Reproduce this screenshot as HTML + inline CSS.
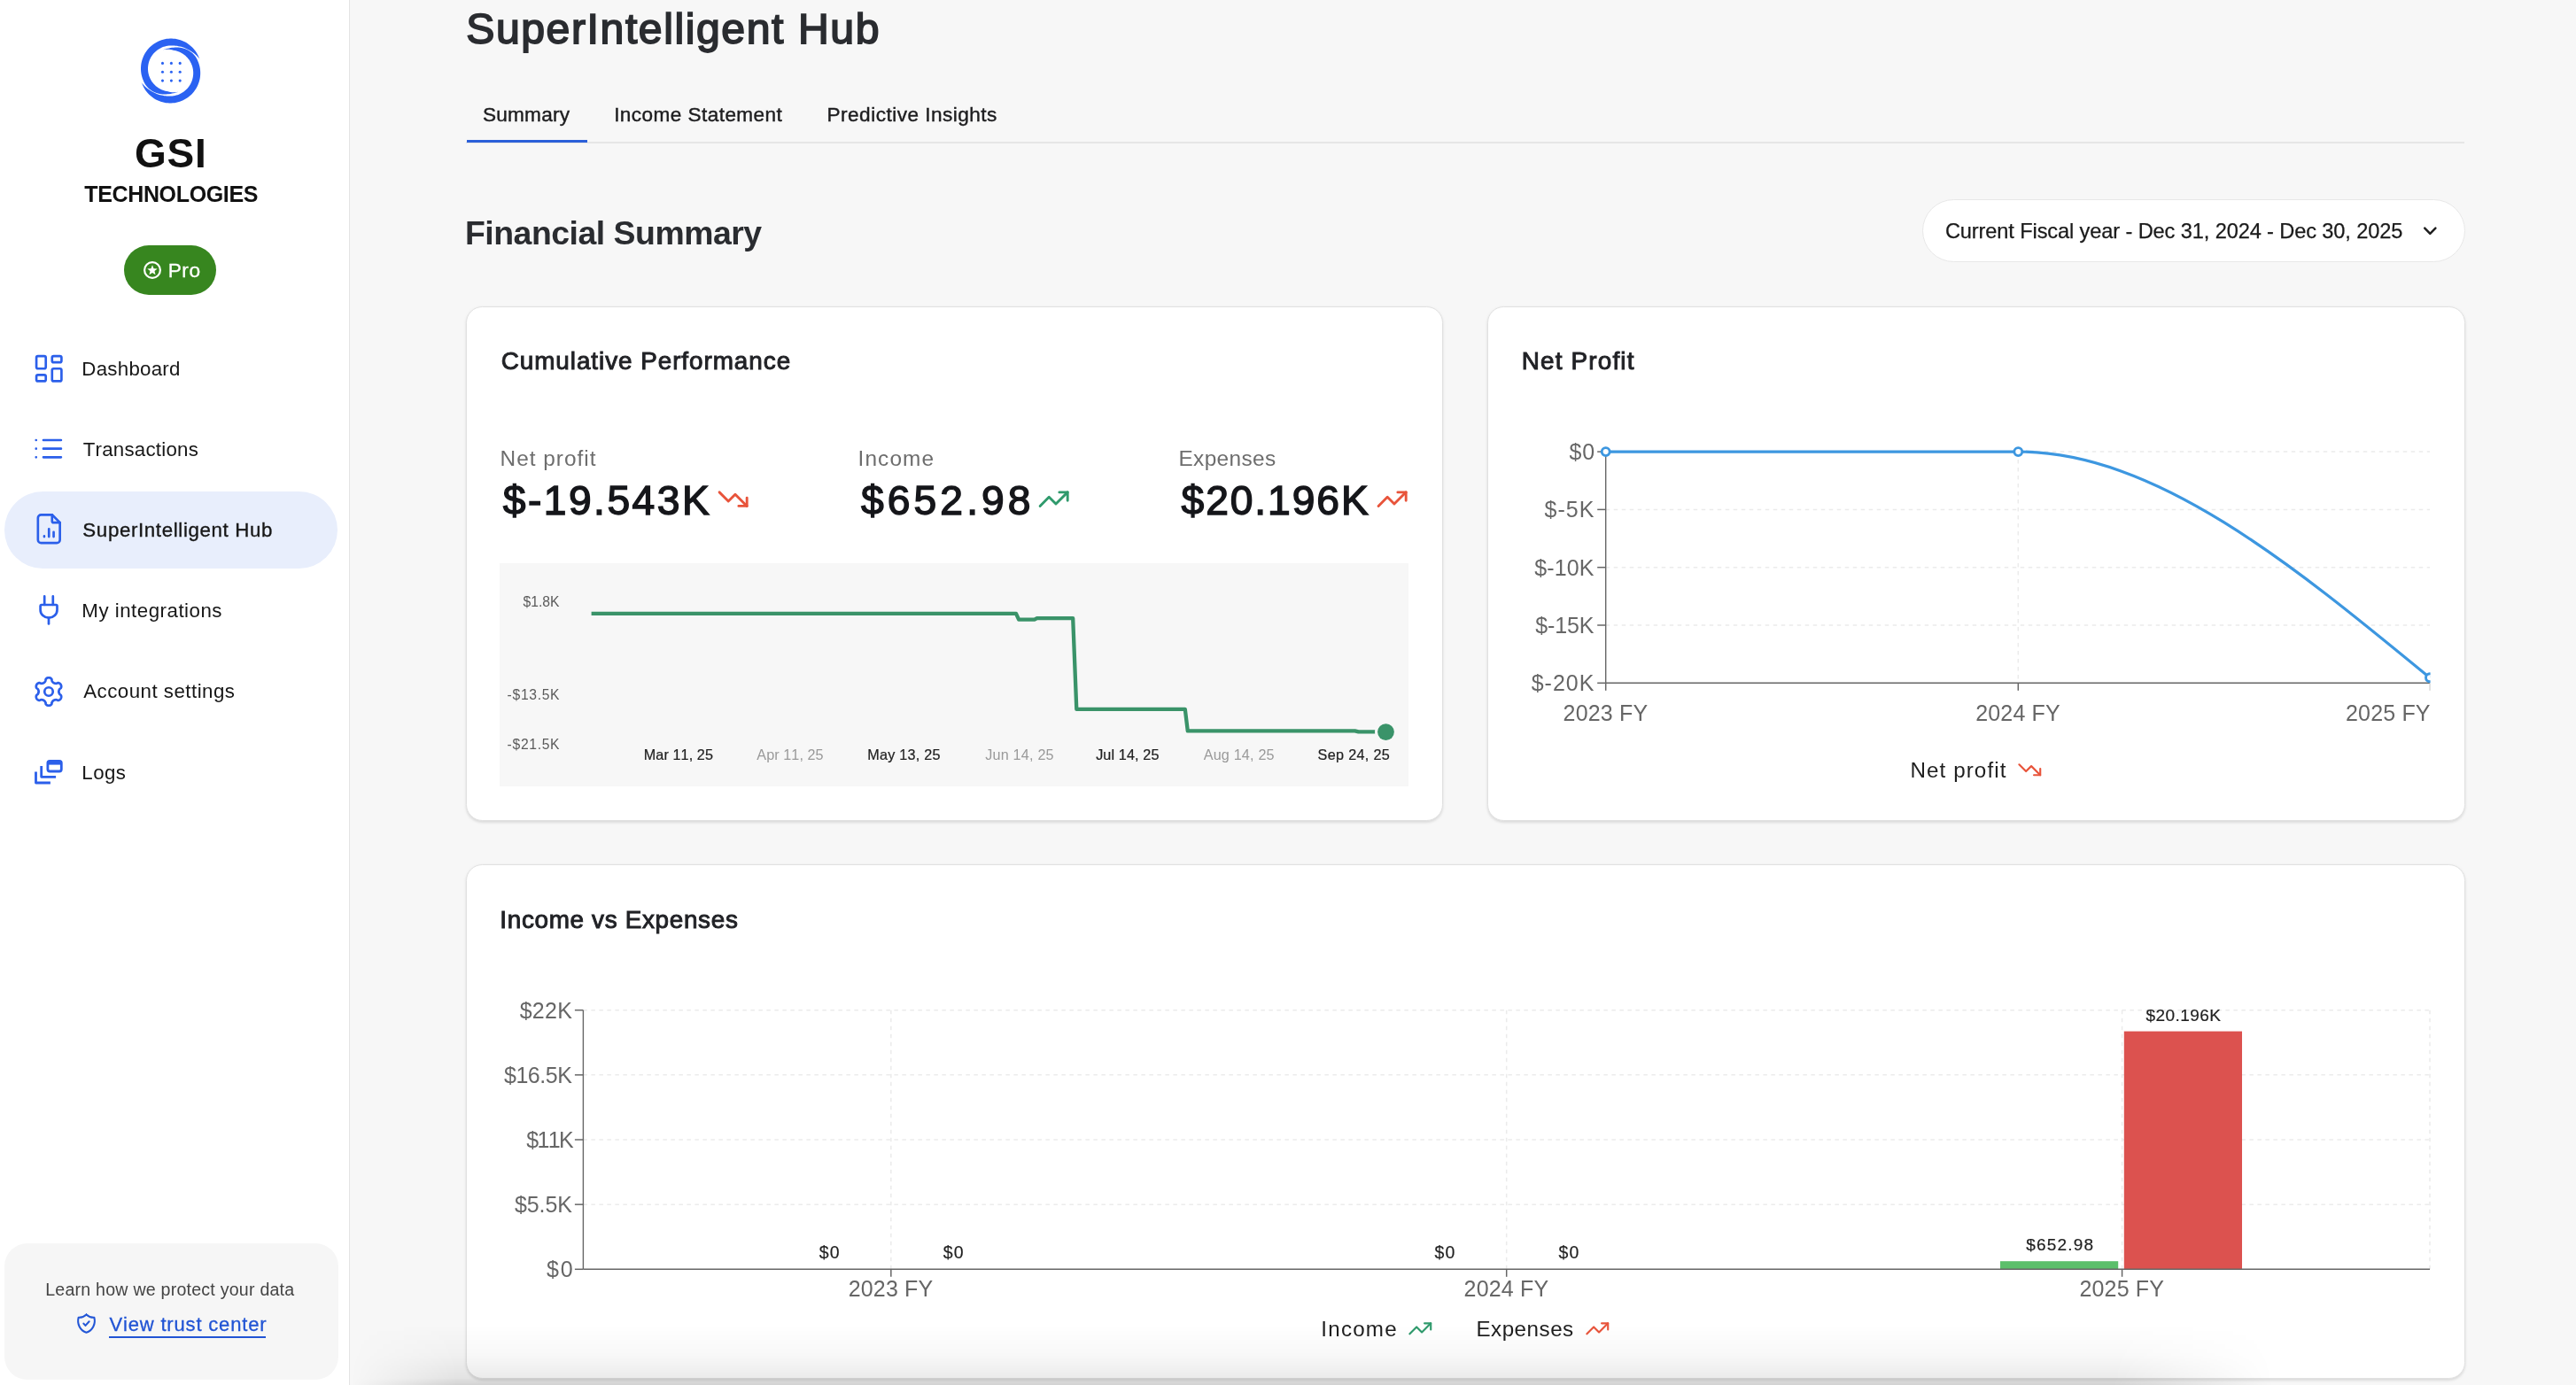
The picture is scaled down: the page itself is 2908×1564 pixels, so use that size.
<!DOCTYPE html>
<html lang="en"><head><meta charset="utf-8"><title>SuperIntelligent Hub</title>
<style>
*{box-sizing:border-box;margin:0;padding:0}
html,body{width:2908px;height:1564px;overflow:hidden;background:#f7f7f7}
body{position:relative;font-family:"Liberation Sans",sans-serif;font-kerning:none;-webkit-font-smoothing:antialiased}
#root{position:absolute;left:0;top:0;width:2908px;height:1564px;will-change:transform}
.t{position:absolute;white-space:nowrap}
.ic{position:absolute;overflow:visible}
.abs{position:absolute}
.card{position:absolute;background:#fff;border:1px solid #e1e1e1;border-radius:18.5px;box-shadow:0 1.5px 4.5px rgba(0,0,0,.05),0 1.5px 3px rgba(0,0,0,.08)}
svg text{font-family:"Liberation Sans",sans-serif}
</style></head>
<body>
<div id="root">
<div class="abs" style="left:0;top:0;width:394.5px;height:1564px;background:#fff;border-right:1.5px solid #e4e4e4"></div>
<svg class="ic" style="left:159px;top:43px" width="67.2" height="74" viewBox="0 0 67.2 74" fill="#2a62f2"><path d="M66.34,23.99L65.67,22.12L64.89,20.29L64.01,18.51L63.02,16.79L61.94,15.12L60.76,13.52L59.48,11.99L58.13,10.54L56.68,9.17L55.17,7.89L53.57,6.70L51.92,5.60L50.20,4.61L48.42,3.71L46.60,2.92L44.73,2.24L42.83,1.67L40.89,1.21L38.94,0.86L36.96,0.63L34.98,0.51L32.99,0.51L31.01,0.63L29.03,0.86L27.08,1.21L25.14,1.67L23.24,2.25L21.37,2.93L19.55,3.72L17.78,4.62L16.06,5.62L14.40,6.72L12.81,7.91L11.29,9.19L9.85,10.56L8.50,12.02L7.23,13.54L6.05,15.14L4.96,16.81L3.98,18.54L3.10,20.32L2.32,22.15L1.65,24.02L1.10,25.93L0.65,27.87L0.32,29.83L0.11,31.80L0.01,33.79L0.02,35.78L0.16,37.76L0.40,39.73L0.77,41.69L1.24,43.61L1.83,45.51L2.53,47.37L3.34,49.19L4.25,50.96L5.27,52.66L6.43,54.27L7.74,55.77L9.17,57.14L10.70,58.37L12.33,59.47L14.03,60.43L15.78,61.25L17.58,61.94L19.40,62.49L21.23,62.91L23.07,63.20L24.89,63.39L26.70,63.46L28.48,63.44L30.23,63.34L31.95,63.16L33.63,62.91L35.28,62.61L36.89,62.26L38.48,61.88L40.05,61.47L41.61,61.03L41.55,60.84L39.99,61.18L38.39,61.32L36.79,61.31L35.21,61.17L33.65,60.94L32.13,60.65L30.62,60.34L29.13,60.04L27.64,59.71L26.18,59.30L24.75,58.80L23.34,58.22L21.97,57.55L20.65,56.81L19.37,55.99L18.14,55.10L16.96,54.14L15.84,53.11L14.78,52.02L13.79,50.86L12.87,49.65L12.02,48.39L11.25,47.09L10.55,45.73L9.94,44.34L9.40,42.92L8.95,41.47L8.59,39.99L8.31,38.50L8.12,36.99L8.02,35.48L8.01,33.96L8.08,32.44L8.25,30.93L8.50,29.43L8.84,27.95L9.27,26.49L9.78,25.06L10.37,23.66L11.04,22.29L11.80,20.97L12.62,19.70L13.53,18.47L14.50,17.31L15.54,16.20L16.64,15.15L17.80,14.17L19.01,13.25L20.28,12.41L21.59,11.65L22.95,10.96L24.34,10.36L25.77,9.84L27.23,9.40L28.71,9.04L30.20,8.78L31.71,8.59L33.23,8.48L34.75,8.43L36.28,8.44L37.81,8.52L39.35,8.66L40.89,8.86L42.44,9.13L43.99,9.46L45.54,9.86L47.10,10.33L48.65,10.87L50.21,11.48L51.76,12.17L53.32,12.93L54.86,13.78L56.40,14.72L57.93,15.74L59.44,16.85L60.94,18.06L62.41,19.36L63.85,20.77L65.26,22.28L66.62,23.90Z"/><path d="M66.34,23.99L65.67,22.12L64.89,20.29L64.01,18.51L63.02,16.79L61.94,15.12L60.76,13.52L59.48,11.99L58.13,10.54L56.68,9.17L55.17,7.89L53.57,6.70L51.92,5.60L50.20,4.61L48.42,3.71L46.60,2.92L44.73,2.24L42.83,1.67L40.89,1.21L38.94,0.86L36.96,0.63L34.98,0.51L32.99,0.51L31.01,0.63L29.03,0.86L27.08,1.21L25.14,1.67L23.24,2.25L21.37,2.93L19.55,3.72L17.78,4.62L16.06,5.62L14.40,6.72L12.81,7.91L11.29,9.19L9.85,10.56L8.50,12.02L7.23,13.54L6.05,15.14L4.96,16.81L3.98,18.54L3.10,20.32L2.32,22.15L1.65,24.02L1.10,25.93L0.65,27.87L0.32,29.83L0.11,31.80L0.01,33.79L0.02,35.78L0.16,37.76L0.40,39.73L0.77,41.69L1.24,43.61L1.83,45.51L2.53,47.37L3.34,49.19L4.25,50.96L5.27,52.66L6.43,54.27L7.74,55.77L9.17,57.14L10.70,58.37L12.33,59.47L14.03,60.43L15.78,61.25L17.58,61.94L19.40,62.49L21.23,62.91L23.07,63.20L24.89,63.39L26.70,63.46L28.48,63.44L30.23,63.34L31.95,63.16L33.63,62.91L35.28,62.61L36.89,62.26L38.48,61.88L40.05,61.47L41.61,61.03L41.55,60.84L39.99,61.18L38.39,61.32L36.79,61.31L35.21,61.17L33.65,60.94L32.13,60.65L30.62,60.34L29.13,60.04L27.64,59.71L26.18,59.30L24.75,58.80L23.34,58.22L21.97,57.55L20.65,56.81L19.37,55.99L18.14,55.10L16.96,54.14L15.84,53.11L14.78,52.02L13.79,50.86L12.87,49.65L12.02,48.39L11.25,47.09L10.55,45.73L9.94,44.34L9.40,42.92L8.95,41.47L8.59,39.99L8.31,38.50L8.12,36.99L8.02,35.48L8.01,33.96L8.08,32.44L8.25,30.93L8.50,29.43L8.84,27.95L9.27,26.49L9.78,25.06L10.37,23.66L11.04,22.29L11.80,20.97L12.62,19.70L13.53,18.47L14.50,17.31L15.54,16.20L16.64,15.15L17.80,14.17L19.01,13.25L20.28,12.41L21.59,11.65L22.95,10.96L24.34,10.36L25.77,9.84L27.23,9.40L28.71,9.04L30.20,8.78L31.71,8.59L33.23,8.48L34.75,8.43L36.28,8.44L37.81,8.52L39.35,8.66L40.89,8.86L42.44,9.13L43.99,9.46L45.54,9.86L47.10,10.33L48.65,10.87L50.21,11.48L51.76,12.17L53.32,12.93L54.86,13.78L56.40,14.72L57.93,15.74L59.44,16.85L60.94,18.06L62.41,19.36L63.85,20.77L65.26,22.28L66.62,23.90Z" transform="rotate(180 33.6 37)"/><circle cx="24.5" cy="28.4" r="1.55"/><circle cx="34.4" cy="28.4" r="1.55"/><circle cx="44.2" cy="28.4" r="1.55"/><circle cx="24.5" cy="38.2" r="1.55"/><circle cx="34.4" cy="38.2" r="1.55"/><circle cx="44.2" cy="38.2" r="1.55"/><circle cx="24.5" cy="48.1" r="1.55"/><circle cx="34.4" cy="48.1" r="1.55"/><circle cx="44.2" cy="48.1" r="1.55"/></svg>
<div class="t" style="left:152.11px;top:147px;font-size:46px;line-height:52px;color:#111;font-weight:700;letter-spacing:0.659px;">GSI</div>
<div class="t" style="left:95.22px;top:205px;font-size:25px;line-height:28px;color:#111;font-weight:700;letter-spacing:-0.342px;">TECHNOLOGIES</div>
<div class="abs" style="left:140px;top:276.7px;width:104px;height:56px;border-radius:28px;background:#37861f"></div>
<svg class="ic" style="left:159.70px;top:292.80px" width="24" height="24" viewBox="0 0 24 24" fill="none" stroke="#fff" stroke-width="2.2" stroke-linecap="round" stroke-linejoin="round"><circle cx="12" cy="12" r="8.9" /><polygon points="12.00,6.30 13.53,10.20 17.71,10.45 14.47,13.10 15.53,17.15 12.00,14.90 8.47,17.15 9.53,13.10 6.29,10.45 10.47,10.20" fill="#fff" stroke="none"/></svg>
<div class="t" style="left:189.69px;top:292px;font-size:22.7px;line-height:26px;color:#fff;letter-spacing:0.535px;-webkit-text-stroke:0.3px #fff;">Pro</div>
<div class="abs" style="left:5px;top:554.5px;width:376px;height:87.5px;border-radius:44px;background:#e8eefc"></div>
<div class="t" style="left:92.37px;top:404px;font-size:22.3px;line-height:25px;color:#171717;letter-spacing:0.246px;">Dashboard</div>
<div class="t" style="left:93.71px;top:495px;font-size:22.3px;line-height:25px;color:#171717;letter-spacing:0.224px;">Transactions</div>
<div class="t" style="left:93.37px;top:586px;font-size:22.3px;line-height:25px;color:#171717;letter-spacing:0.631px;-webkit-text-stroke:0.35px #171717;">SuperIntelligent Hub</div>
<div class="t" style="left:92.37px;top:677px;font-size:22.3px;line-height:25px;color:#171717;letter-spacing:0.494px;">My integrations</div>
<div class="t" style="left:94.16px;top:768px;font-size:22.3px;line-height:25px;color:#171717;letter-spacing:0.482px;">Account settings</div>
<div class="t" style="left:92.37px;top:860px;font-size:22.3px;line-height:25px;color:#171717;letter-spacing:0.425px;">Logs</div>
<svg class="ic" style="left:33.75px;top:394.75px" width="42.5" height="42.5" viewBox="0 0 24 24" fill="none" stroke="#2b5fea" stroke-width="1.5" stroke-linecap="round" stroke-linejoin="round"><rect x="4" y="4" width="6" height="8" rx="1"/><rect x="4" y="16" width="6" height="4" rx="1"/><rect x="14" y="12" width="6" height="8" rx="1"/><rect x="14" y="4" width="6" height="4" rx="1"/></svg>
<svg class="ic" style="left:33px;top:485px" width="44" height="44" viewBox="33 485 44 44" fill="none" stroke="#2b5fea" stroke-width="2.7" stroke-linecap="round"><path d="M49 497H68.9M49 506.7H68.9M49 516.3H68.9M40.75 497v.01M40.75 506.7v.01M40.75 516.3v.01"/></svg>
<svg class="ic" style="left:33.75px;top:576.35px" width="42.5" height="42.5" viewBox="0 0 24 24" fill="none" stroke="#2b5fea" stroke-width="1.5" stroke-linecap="round" stroke-linejoin="round"><path d="M14 3v4a1 1 0 0 0 1 1h4"/><path d="M17 21h-10a2 2 0 0 1 -2 -2v-14a2 2 0 0 1 2 -2h7l5 5v11a2 2 0 0 1 -2 2z"/><path d="M9 17v-.4M12 17v-5M15 17v-3"/></svg>
<svg class="ic" style="left:33px;top:667.4px" width="44" height="44" viewBox="33 667.4 44 44" fill="none" stroke="#2b5fea" stroke-width="2.7" stroke-linecap="round" stroke-linejoin="round"><path d="M50.2 673.8v9.4M59.8 673.8v9.4"/><path d="M46.7 683.4h16.6a1.2 1.2 0 0 1 1.2 1.2v4.6a9.45 8.9 0 0 1 -18.9 0v-4.6a1.2 1.2 0 0 1 1.1 -1.2z"/><path d="M55 698.3v6.6"/></svg>
<svg class="ic" style="left:33px;top:758.7px" width="44" height="44" viewBox="33 758.7 44 44" fill="none" stroke="#2b5fea" stroke-width="2.7" stroke-linejoin="round"><path d="M55.00,764.95L55.41,764.97L55.82,765.03L56.23,765.13L56.62,765.28L57.01,765.46L57.38,765.69L57.73,765.98L58.06,766.32L58.35,766.75L58.51,767.61L58.62,768.47L58.83,768.91L59.05,769.27L59.27,769.58L59.49,769.86L59.71,770.11L59.94,770.33L60.18,770.53L60.42,770.71L60.67,770.87L60.94,771.01L61.21,771.13L61.51,771.23L61.81,771.32L62.14,771.39L62.49,771.45L62.87,771.48L63.30,771.49L63.78,771.45L64.58,771.12L65.40,770.83L65.93,770.86L66.39,770.97L66.81,771.14L67.19,771.34L67.55,771.58L67.87,771.86L68.16,772.15L68.42,772.48L68.64,772.83L68.83,773.19L68.98,773.58L69.09,773.98L69.17,774.39L69.20,774.82L69.18,775.26L69.12,775.70L68.98,776.16L68.75,776.63L68.09,777.19L67.40,777.72L67.13,778.12L66.92,778.49L66.76,778.84L66.63,779.17L66.53,779.49L66.45,779.80L66.39,780.10L66.36,780.40L66.35,780.70L66.36,781.00L66.39,781.30L66.45,781.60L66.53,781.91L66.63,782.23L66.76,782.56L66.92,782.91L67.13,783.28L67.40,783.68L68.09,784.21L68.75,784.77L68.98,785.24L69.12,785.70L69.18,786.14L69.20,786.58L69.17,787.01L69.09,787.42L68.98,787.82L68.83,788.21L68.64,788.58L68.42,788.92L68.16,789.25L67.87,789.54L67.55,789.82L67.19,790.06L66.81,790.26L66.39,790.43L65.93,790.54L65.40,790.57L64.58,790.28L63.78,789.95L63.30,789.91L62.87,789.92L62.49,789.95L62.14,790.01L61.81,790.08L61.51,790.17L61.21,790.27L60.94,790.39L60.67,790.53L60.42,790.69L60.18,790.87L59.94,791.07L59.71,791.29L59.49,791.54L59.27,791.82L59.05,792.13L58.83,792.49L58.62,792.93L58.51,793.79L58.35,794.65L58.06,795.08L57.73,795.42L57.38,795.71L57.01,795.94L56.62,796.12L56.23,796.27L55.82,796.37L55.41,796.43L55.00,796.45L54.59,796.43L54.18,796.37L53.77,796.27L53.38,796.12L52.99,795.94L52.62,795.71L52.27,795.42L51.94,795.08L51.65,794.65L51.49,793.79L51.38,792.93L51.17,792.49L50.95,792.13L50.73,791.82L50.51,791.54L50.29,791.29L50.06,791.07L49.82,790.87L49.58,790.69L49.33,790.53L49.06,790.39L48.79,790.27L48.49,790.17L48.19,790.08L47.86,790.01L47.51,789.95L47.13,789.92L46.70,789.91L46.22,789.95L45.42,790.28L44.60,790.57L44.07,790.54L43.61,790.43L43.19,790.26L42.81,790.06L42.45,789.82L42.13,789.54L41.84,789.25L41.58,788.92L41.36,788.58L41.17,788.21L41.02,787.82L40.91,787.42L40.83,787.01L40.80,786.58L40.82,786.14L40.88,785.70L41.02,785.24L41.25,784.77L41.91,784.21L42.60,783.68L42.87,783.28L43.08,782.91L43.24,782.56L43.37,782.23L43.47,781.91L43.55,781.60L43.61,781.30L43.64,781.00L43.65,780.70L43.64,780.40L43.61,780.10L43.55,779.80L43.47,779.49L43.37,779.17L43.24,778.84L43.08,778.49L42.87,778.12L42.60,777.72L41.91,777.19L41.25,776.63L41.02,776.16L40.88,775.70L40.82,775.26L40.80,774.82L40.83,774.39L40.91,773.98L41.02,773.58L41.17,773.19L41.36,772.83L41.58,772.48L41.84,772.15L42.13,771.86L42.45,771.58L42.81,771.34L43.19,771.14L43.61,770.97L44.07,770.86L44.60,770.83L45.42,771.12L46.22,771.45L46.70,771.49L47.13,771.48L47.51,771.45L47.86,771.39L48.19,771.32L48.49,771.23L48.79,771.13L49.06,771.01L49.33,770.87L49.58,770.71L49.82,770.53L50.06,770.33L50.29,770.11L50.51,769.86L50.73,769.58L50.95,769.27L51.17,768.91L51.38,768.47L51.49,767.61L51.65,766.75L51.94,766.32L52.27,765.98L52.62,765.69L52.99,765.46L53.38,765.28L53.77,765.13L54.18,765.03L54.59,764.97Z"/><circle cx="55" cy="780.7" r="4.75"/></svg>
<svg class="ic" style="left:33px;top:849px" width="44" height="44" viewBox="33 849 44 44" fill="none" stroke="#2b5fea" stroke-width="2.8" stroke-linejoin="round"><rect x="53.9" y="859.4" width="15.4" height="11.6" rx="2.2"/><rect x="53.9" y="859" width="15.4" height="4.6" fill="#2b5fea" stroke="none"/><path d="M46.7 865v12.3h16.4M40.5 871.6v12.4h16.4"/></svg>
<div class="abs" style="left:4.7px;top:1404px;width:377.5px;height:154px;border-radius:26px;background:#f6f6f6"></div>
<div class="t" style="left:51.19px;top:1445px;font-size:19.6px;line-height:22px;color:#444;letter-spacing:0.225px;">Learn how we protect your data</div>
<svg class="ic" style="left:85.1px;top:1481.3px" width="25" height="27.2" viewBox="0 0 24 24" preserveAspectRatio="none" fill="none" stroke="#2457d6" stroke-width="2.1" stroke-linecap="round" stroke-linejoin="round"><path vector-effect="non-scaling-stroke" d="M9 12l2 2l4 -4"/><path vector-effect="non-scaling-stroke" d="M12 3a12 12 0 0 0 8.5 3a12 12 0 0 1 -8.5 15a12 12 0 0 1 -8.5 -15a12 12 0 0 0 8.5 -3"/></svg>
<div class="t" style="left:123.46px;top:1483px;font-size:22px;line-height:25px;color:#2154d4;letter-spacing:0.831px;-webkit-text-stroke:0.3px #2154d4;">View trust center</div>
<div class="abs" style="left:123.4px;top:1509px;width:176.6px;height:2px;background:#2154d4"></div>
<div class="t" style="left:526.21px;top:5px;font-size:48.2px;line-height:54px;color:#2a2c30;letter-spacing:1.560px;-webkit-text-stroke:1.75px #2a2c30;">SuperIntelligent Hub</div>
<div class="t" style="left:544.99px;top:117px;font-size:22.6px;line-height:25px;color:#1d1d1f;letter-spacing:0.225px;-webkit-text-stroke:0.42px #1d1d1f;">Summary</div>
<div class="t" style="left:693.13px;top:117px;font-size:22.6px;line-height:25px;color:#1d1d1f;letter-spacing:0.427px;-webkit-text-stroke:0.42px #1d1d1f;">Income Statement</div>
<div class="t" style="left:933.56px;top:117px;font-size:22.6px;line-height:25px;color:#1d1d1f;letter-spacing:0.470px;-webkit-text-stroke:0.42px #1d1d1f;">Predictive Insights</div>
<div class="abs" style="left:526px;top:160.3px;width:2256px;height:1.5px;background:#e6e6e6"></div>
<div class="abs" style="left:526.5px;top:157.5px;width:136px;height:3px;background:#2b5fd9"></div>
<div class="t" style="left:525.03px;top:242px;font-size:37.4px;line-height:42px;color:#2a2c30;font-weight:700;letter-spacing:-0.487px;">Financial Summary</div>
<div class="abs" style="left:2170px;top:225px;width:613px;height:71px;border-radius:36px;background:#fff;border:1.5px solid #e7e7e7"></div>
<div class="t" style="left:2195.95px;top:248px;font-size:23.6px;line-height:26px;color:#1a1a1a;letter-spacing:-0.114px;-webkit-text-stroke:0.25px #1a1a1a;">Current Fiscal year - Dec 31, 2024 - Dec 30, 2025</div>
<svg class="ic" style="left:2730px;top:250px" width="28" height="22" viewBox="2730 250 28 22" fill="none" stroke="#1f1f1f" stroke-width="2.5" stroke-linecap="round" stroke-linejoin="round"><path d="M2737.2 257.6l6.1 6.2l6.1 -6.2"/></svg>
<div class="card" style="left:526px;top:346px;width:1103px;height:581px"></div>
<div class="t" style="left:565.68px;top:392px;font-size:27.9px;line-height:31px;color:#212226;letter-spacing:0.931px;-webkit-text-stroke:0.95px #212226;">Cumulative Performance</div>
<div class="t" style="left:564.60px;top:504px;font-size:24.4px;line-height:27px;color:#6d6d6d;letter-spacing:0.986px;">Net profit</div>
<div class="t" style="left:968.56px;top:504px;font-size:24.4px;line-height:27px;color:#6d6d6d;letter-spacing:1.101px;">Income</div>
<div class="t" style="left:1330.40px;top:504px;font-size:24.4px;line-height:27px;color:#6d6d6d;letter-spacing:0.389px;">Expenses</div>
<div class="t" style="left:567.76px;top:539px;font-size:46.2px;line-height:52px;color:#15161a;letter-spacing:2.477px;-webkit-text-stroke:1.45px #15161a;">$-19.543K</div>
<div class="t" style="left:972.06px;top:539px;font-size:46.2px;line-height:52px;color:#15161a;letter-spacing:4.084px;-webkit-text-stroke:1.45px #15161a;">$652.98</div>
<div class="t" style="left:1333.56px;top:539px;font-size:46.2px;line-height:52px;color:#15161a;letter-spacing:1.915px;-webkit-text-stroke:1.45px #15161a;">$20.196K</div>
<svg class="ic" style="left:809.45px;top:544.95px" width="37.3" height="37.3" viewBox="0 0 24 24" fill="none" stroke="#e8543b" stroke-width="1.85" stroke-linecap="round" stroke-linejoin="round"><path d="M22 17L13.5 8.5L8.5 13.5L2 7"/><path d="M16 17h6v-6"/></svg>
<svg class="ic" style="left:1170.75px;top:544.95px" width="37.3" height="37.3" viewBox="0 0 24 24" fill="none" stroke="#2f9a6c" stroke-width="1.85" stroke-linecap="round" stroke-linejoin="round"><path d="M22 7L13.5 15.5L8.5 10.5L2 17"/><path d="M16 7h6v6"/></svg>
<svg class="ic" style="left:1553.05px;top:544.95px" width="37.3" height="37.3" viewBox="0 0 24 24" fill="none" stroke="#e8543b" stroke-width="1.85" stroke-linecap="round" stroke-linejoin="round"><path d="M22 7L13.5 15.5L8.5 10.5L2 17"/><path d="M16 7h6v6"/></svg>
<div class="abs" style="left:564px;top:636px;width:1026px;height:252px;background:#f7f7f7"></div>
<div class="t" style="left:590.54px;top:671px;font-size:15.7px;line-height:17px;color:#5b5b5b;">$1.8K</div>
<div class="t" style="left:572.61px;top:776px;font-size:15.7px;line-height:17px;color:#5b5b5b;letter-spacing:0.662px;">-$13.5K</div>
<div class="t" style="left:572.61px;top:832px;font-size:15.7px;line-height:17px;color:#5b5b5b;letter-spacing:0.662px;">-$21.5K</div>
<div class="t" style="left:726.78px;top:843px;font-size:16.2px;line-height:18px;color:#1f1f1f;letter-spacing:0.082px;-webkit-text-stroke:0.22px #1f1f1f;">Mar 11, 25</div>
<div class="t" style="left:854.37px;top:843px;font-size:16.2px;line-height:18px;color:#9a9a9a;letter-spacing:0.061px;">Apr 11, 25</div>
<div class="t" style="left:979.28px;top:843px;font-size:16.2px;line-height:18px;color:#1f1f1f;letter-spacing:0.237px;-webkit-text-stroke:0.22px #1f1f1f;">May 13, 25</div>
<div class="t" style="left:1112.16px;top:843px;font-size:16.2px;line-height:18px;color:#9a9a9a;letter-spacing:0.205px;">Jun 14, 25</div>
<div class="t" style="left:1237.17px;top:843px;font-size:16.2px;line-height:18px;color:#1f1f1f;letter-spacing:0.115px;-webkit-text-stroke:0.22px #1f1f1f;">Jul 14, 25</div>
<div class="t" style="left:1358.67px;top:843px;font-size:16.2px;line-height:18px;color:#9a9a9a;letter-spacing:0.181px;">Aug 14, 25</div>
<div class="t" style="left:1487.58px;top:843px;font-size:16.2px;line-height:18px;color:#1f1f1f;letter-spacing:0.323px;-webkit-text-stroke:0.22px #1f1f1f;">Sep 24, 25</div>
<svg class="ic" style="left:564.4px;top:636.2px" width="1025.3" height="252.2" viewBox="564.4 636.2 1025.3 252.2" fill="none"><path d="M668 693H1147.4L1150.5 699.9H1168.2L1171 698.4H1211.6L1215.7 801H1338.2L1341.2 825.6H1530L1534 826.6H1553" stroke="#3a9369" stroke-width="4.3" stroke-linejoin="round"/><circle cx="1564.9" cy="826.8" r="12.4" fill="#f7f7f7"/><circle cx="1564.9" cy="826.8" r="9.4" fill="#3a9369"/></svg>
<div class="card" style="left:1679px;top:346px;width:1104px;height:581px"></div>
<div class="t" style="left:1717.79px;top:392px;font-size:27.9px;line-height:31px;color:#212226;letter-spacing:1.160px;-webkit-text-stroke:0.95px #212226;">Net Profit</div>
<svg class="ic" style="left:1700px;top:480px" width="1070" height="330" viewBox="1700 480 1070 330" fill="none"><path d="M1812.7 510.1H2743.0" stroke="#ebebeb" stroke-width="1.5" stroke-dasharray="4.5 4.5"/><path d="M1812.7 575.4H2743.0" stroke="#ebebeb" stroke-width="1.5" stroke-dasharray="4.5 4.5"/><path d="M1812.7 640.7H2743.0" stroke="#ebebeb" stroke-width="1.5" stroke-dasharray="4.5 4.5"/><path d="M1812.7 706.0H2743.0" stroke="#ebebeb" stroke-width="1.5" stroke-dasharray="4.5 4.5"/><path d="M2278.3 510.1V771.3" stroke="#ebebeb" stroke-width="1.5" stroke-dasharray="4.5 4.5"/><path d="M1812.7 510.1V771.3M1812.7 771.3H2743.0" stroke="#666" stroke-width="1.4"/><path d="M1803.2 510.1H1812.7" stroke="#666" stroke-width="1.5"/><path d="M1803.2 575.4H1812.7" stroke="#666" stroke-width="1.5"/><path d="M1803.2 640.7H1812.7" stroke="#666" stroke-width="1.5"/><path d="M1803.2 706.0H1812.7" stroke="#666" stroke-width="1.5"/><path d="M1803.2 771.3H1812.7" stroke="#666" stroke-width="1.5"/><path d="M1812.7 771.3V779.8" stroke="#666" stroke-width="1.5"/><path d="M2278.3 771.3V779.8" stroke="#666" stroke-width="1.5"/><path d="M2743.0 771.3V779.8" stroke="#c4c4c4" stroke-width="1"/><clipPath id="c2"><rect x="1800.7" y="495" width="942.9" height="276.5"/></clipPath><g clip-path="url(#c2)"><path d="M1812.7 510.1L2278.3 510.1C2433.2 510.1 2588.1 637.8 2743.0 765.3" stroke="#3d97e0" stroke-width="3.2"/><circle cx="1812.7" cy="510.1" r="4.5" fill="#fff" stroke="#3d97e0" stroke-width="2.9"/><circle cx="2278.3" cy="510.1" r="4.5" fill="#fff" stroke="#3d97e0" stroke-width="2.9"/><circle cx="2743.0" cy="765.3" r="4.5" fill="#fff" stroke="#3d97e0" stroke-width="2.9"/></g></svg>
<div class="t" style="left:1771.45px;top:496px;font-size:25.0px;line-height:28px;color:#666;letter-spacing:0.896px;">$0</div>
<div class="t" style="left:1743.55px;top:561px;font-size:25.0px;line-height:28px;color:#666;letter-spacing:1.039px;">$-5K</div>
<div class="t" style="left:1732.35px;top:627px;font-size:25.0px;line-height:28px;color:#666;letter-spacing:0.103px;">$-10K</div>
<div class="t" style="left:1733.15px;top:692px;font-size:25.0px;line-height:28px;color:#666;letter-spacing:-0.097px;">$-15K</div>
<div class="t" style="left:1728.65px;top:757px;font-size:25.0px;line-height:28px;color:#666;letter-spacing:1.028px;">$-20K</div>
<div class="t" style="left:1764.60px;top:791px;font-size:25.0px;line-height:28px;color:#666;letter-spacing:0.165px;">2023 FY</div>
<div class="t" style="left:2230.20px;top:791px;font-size:25.0px;line-height:28px;color:#666;letter-spacing:0.165px;">2024 FY</div>
<div class="t" style="left:2648.05px;top:791px;font-size:25.0px;line-height:28px;color:#666;letter-spacing:0.165px;">2025 FY</div>
<div class="t" style="left:2156.42px;top:856px;font-size:24.2px;line-height:27px;color:#1f1f1f;letter-spacing:1.096px;">Net profit</div>
<svg class="ic" style="left:2277.00px;top:855.00px" width="28.6" height="28.6" viewBox="0 0 24 24" fill="none" stroke="#e8543b" stroke-width="1.8" stroke-linecap="round" stroke-linejoin="round"><path d="M22 17L13.5 8.5L8.5 13.5L2 7"/><path d="M16 17h6v-6"/></svg>
<div class="card" style="left:526px;top:976px;width:2257px;height:581px"></div>
<div class="t" style="left:564.31px;top:1023px;font-size:27.9px;line-height:31px;color:#212226;letter-spacing:0.659px;-webkit-text-stroke:0.95px #212226;">Income vs Expenses</div>
<svg class="ic" style="left:540px;top:1120px" width="2230" height="340" viewBox="540 1120 2230 340" fill="none"><path d="M658.4 1140.70H2743.0" stroke="#ebebeb" stroke-width="1.5" stroke-dasharray="4.5 4.5"/><path d="M658.4 1213.85H2743.0" stroke="#ebebeb" stroke-width="1.5" stroke-dasharray="4.5 4.5"/><path d="M658.4 1287.00H2743.0" stroke="#ebebeb" stroke-width="1.5" stroke-dasharray="4.5 4.5"/><path d="M658.4 1360.15H2743.0" stroke="#ebebeb" stroke-width="1.5" stroke-dasharray="4.5 4.5"/><path d="M1005.83 1140.7V1433.3000000000002" stroke="#ebebeb" stroke-width="1.5" stroke-dasharray="4.5 4.5"/><path d="M1700.70 1140.7V1433.3000000000002" stroke="#ebebeb" stroke-width="1.5" stroke-dasharray="4.5 4.5"/><path d="M2395.57 1140.7V1433.3000000000002" stroke="#ebebeb" stroke-width="1.5" stroke-dasharray="4.5 4.5"/><path d="M2743.00 1140.7V1433.3000000000002" stroke="#ebebeb" stroke-width="1.5" stroke-dasharray="4.5 4.5"/><rect x="2258" y="1424.2" width="133.2" height="9.10" fill="#5cbf6b"/><rect x="2397.8" y="1164.6" width="133.2" height="268.70" fill="#dc524f"/><path d="M658.4 1140.7V1433.30M658.4 1433.30H2743.0" stroke="#666" stroke-width="1.4"/><path d="M648.9 1140.70H658.4" stroke="#666" stroke-width="1.5"/><path d="M648.9 1213.85H658.4" stroke="#666" stroke-width="1.5"/><path d="M648.9 1287.00H658.4" stroke="#666" stroke-width="1.5"/><path d="M648.9 1360.15H658.4" stroke="#666" stroke-width="1.5"/><path d="M648.9 1433.30H658.4" stroke="#666" stroke-width="1.5"/><path d="M1005.83 1433.30V1441.80" stroke="#666" stroke-width="1.5"/><path d="M1700.70 1433.30V1441.80" stroke="#666" stroke-width="1.5"/><path d="M2395.57 1433.30V1441.80" stroke="#666" stroke-width="1.5"/></svg>
<div class="t" style="left:586.65px;top:1127px;font-size:25.0px;line-height:28px;color:#666;letter-spacing:0.279px;">$22K</div>
<div class="t" style="left:568.95px;top:1200px;font-size:25.0px;line-height:28px;color:#666;letter-spacing:-0.462px;">$16.5K</div>
<div class="t" style="left:594.15px;top:1273px;font-size:25.0px;line-height:28px;color:#666;letter-spacing:-1.602px;">$11K</div>
<div class="t" style="left:581.05px;top:1346px;font-size:25.0px;line-height:28px;color:#666;letter-spacing:-0.127px;">$5.5K</div>
<div class="t" style="left:616.95px;top:1419px;font-size:25.0px;line-height:28px;color:#666;letter-spacing:1.796px;">$0</div>
<div class="t" style="left:957.73px;top:1441px;font-size:25.0px;line-height:28px;color:#666;letter-spacing:0.165px;">2023 FY</div>
<div class="t" style="left:1652.60px;top:1441px;font-size:25.0px;line-height:28px;color:#666;letter-spacing:0.165px;">2024 FY</div>
<div class="t" style="left:2347.47px;top:1441px;font-size:25.0px;line-height:28px;color:#666;letter-spacing:0.165px;">2025 FY</div>
<div class="t" style="left:2422.41px;top:1136px;font-size:19px;line-height:21px;color:#1f1f1f;letter-spacing:0.464px;-webkit-text-stroke:0.2px #1f1f1f;">$20.196K</div>
<div class="t" style="left:2287.26px;top:1395px;font-size:19px;line-height:21px;color:#1f1f1f;letter-spacing:1.205px;-webkit-text-stroke:0.2px #1f1f1f;">$652.98</div>
<div class="t" style="left:924.74px;top:1403px;font-size:19.5px;line-height:22px;color:#1f1f1f;letter-spacing:1.049px;-webkit-text-stroke:0.2px #1f1f1f;">$0</div>
<div class="t" style="left:1064.74px;top:1403px;font-size:19.5px;line-height:22px;color:#1f1f1f;letter-spacing:1.049px;-webkit-text-stroke:0.2px #1f1f1f;">$0</div>
<div class="t" style="left:1619.60px;top:1403px;font-size:19.5px;line-height:22px;color:#1f1f1f;letter-spacing:1.049px;-webkit-text-stroke:0.2px #1f1f1f;">$0</div>
<div class="t" style="left:1759.60px;top:1403px;font-size:19.5px;line-height:22px;color:#1f1f1f;letter-spacing:1.049px;-webkit-text-stroke:0.2px #1f1f1f;">$0</div>
<div class="t" style="left:1491.37px;top:1487px;font-size:24.2px;line-height:27px;color:#1f1f1f;letter-spacing:1.187px;">Income</div>
<svg class="ic" style="left:1588.70px;top:1485.60px" width="28.6" height="28.6" viewBox="0 0 24 24" fill="none" stroke="#2f9a6c" stroke-width="1.8" stroke-linecap="round" stroke-linejoin="round"><path d="M22 7L13.5 15.5L8.5 10.5L2 17"/><path d="M16 7h6v6"/></svg>
<div class="t" style="left:1666.42px;top:1487px;font-size:24.2px;line-height:27px;color:#1f1f1f;letter-spacing:0.511px;">Expenses</div>
<svg class="ic" style="left:1789.10px;top:1485.60px" width="28.6" height="28.6" viewBox="0 0 24 24" fill="none" stroke="#e8543b" stroke-width="1.8" stroke-linecap="round" stroke-linejoin="round"><path d="M22 7L13.5 15.5L8.5 10.5L2 17"/><path d="M16 7h6v6"/></svg>
<div class="abs" style="left:396px;top:1496px;width:2512px;height:68px;background:linear-gradient(to bottom,rgba(0,0,0,0) 0%,rgba(0,0,0,.028) 50%,rgba(0,0,0,.08) 88%,rgba(0,0,0,.15) 100%);-webkit-mask-image:linear-gradient(to right,rgba(0,0,0,0) 0px,#000 120px,#000 1990px,rgba(0,0,0,0) 2170px);mask-image:linear-gradient(to right,rgba(0,0,0,0) 0px,#000 120px,#000 1990px,rgba(0,0,0,0) 2170px)"></div>
</div>
<script>(function(){var w=window.innerWidth;if(w&&Math.abs(w-2908)>2){var s=w/2908,r=document.getElementById("root"),d=document.documentElement,b=document.body;r.style.transformOrigin="0 0";r.style.transform="scale("+s+")";d.style.width=b.style.width=w+"px";d.style.height=b.style.height=(1564*s)+"px";}})();</script>
</body></html>
